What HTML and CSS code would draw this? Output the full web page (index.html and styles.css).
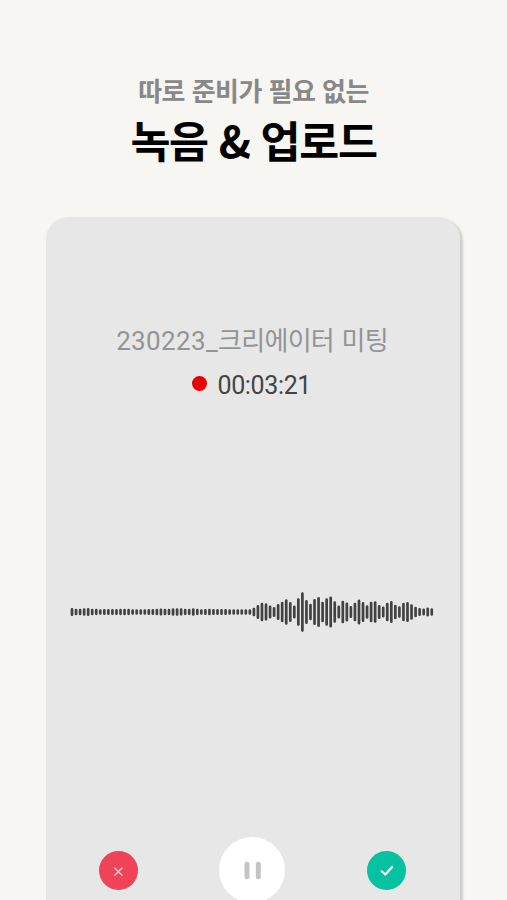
FILE: index.html
```html
<!DOCTYPE html>
<html lang="ko">
<head>
<meta charset="utf-8">
<title>녹음 &amp; 업로드</title>
<link rel="stylesheet" href="styles.css">
</head>
<body>
<main class="page">
  <header class="intro">
    <p class="lead">따로 준비가 필요 없는</p>
    <h1 class="headline">녹음 &amp; 업로드</h1>
  </header>
  <section class="recorder">
    <h2 class="title"><span class="date">230223_</span>크리에이터 미팅</h2>
    <div class="timer"><span class="dot"></span><span class="time">00:03:21</span></div>
    <svg class="wave" viewBox="0 0 364 44"><path id="bars"/></svg>
    <div class="controls">
      <button class="btn cancel" aria-label="취소">
        <svg width="39" height="39" viewBox="0 0 39 39"><path d="M15.800 17l7.2 7.2M23 17L15.800 24.200"/></svg>
      </button>
      <button class="btn pause" aria-label="일시정지">
        <svg width="66" height="66" viewBox="0 0 66 66"><path d="M28 27.200v12.500M39.300 27.200v12.500"/></svg>
      </button>
      <button class="btn done" aria-label="완료">
        <svg width="39" height="39" viewBox="0 0 39 39"><path d="M14.700 20.300l3.600 3.200 6.900-7.500"/></svg>
      </button>
    </div>
  </section>
</main>
<script src="app.js"></script>
</body>
</html>
```
FILE: styles.css
```css
* {
  box-sizing: border-box;
}

body {
  margin: 0;
  background: #f7f6f2;
  font-family: Roboto, "Noto Sans CJK KR", sans-serif;
}

.page {
  height: 900px;
  overflow: hidden;
  display: flex;
  flex-direction: column;
}

.intro {
  height: 217px;
  flex: none;
  padding-top: 72px;
  text-align: center;
  font-family: "Noto Sans CJK KR", sans-serif;
  white-space: nowrap;
}

.lead {
  margin: 0;
  font-size: 26px;
  line-height: 36px;
  font-weight: 700;
  letter-spacing: -0.55px;
  color: #888;
}

.headline {
  margin: 2px 0 0;
  font-size: 43.5px;
  line-height: 60px;
  font-weight: 700;
  letter-spacing: -1.3px;
  color: #000;
}

.recorder {
  width: 414px;
  height: 760px;
  flex: none;
  margin-left: 46px;
  padding: 106px 25px 0 23px;
  border-radius: 22px;
  background: #e7e7e7;
  box-shadow: 3px 2px 2px #d0d0ce;
  display: flex;
  flex-direction: column;
  align-items: center;
}

.title {
  margin: 0;
  font-size: 26px;
  line-height: 36px;
  font-weight: 400;
  letter-spacing: -0.7px;
  word-spacing: 1.6px;
  white-space: nowrap;
  color: #939495;
}

.date {
  letter-spacing: 0.35px;
}

.timer {
  display: flex;
  align-items: center;
  gap: 10.5px;
  height: 30px;
  margin-top: 9px;
  margin-right: 1px;
}

.dot {
  width: 15px;
  height: 15px;
  border-radius: 50%;
  background: #e60000;
}

.time {
  padding-top: 6px;
  font-size: 25px;
  line-height: 30px;
  letter-spacing: -0.35px;
  color: #444;
}

.wave {
  width: 364px;
  height: 44px;
  margin-top: 192px;
  flex: none;
}

.wave path {
  fill: none;
  stroke: #424242;
  stroke-width: 2.7;
  stroke-linecap: round;
}

.controls {
  display: flex;
  align-items: center;
  justify-content: space-between;
  width: 307px;
  margin-top: 203px;
}

.btn {
  padding: 0;
  border: 0;
  border-radius: 50%;
  width: 39px;
  height: 39px;
}

.btn svg {
  display: block;
  fill: none;
  stroke-linecap: round;
  stroke-linejoin: round;
}

.cancel {
  background: #ef4358;
}

.cancel svg {
  stroke: #fbc3c9;
  stroke-width: 1.5;
}

.pause {
  width: 66px;
  height: 66px;
  background: #fff;
}

.pause svg {
  stroke: #c4c4c4;
  stroke-width: 5;
}

.done {
  background: #06c2a0;
}

.done svg {
  stroke: #fff;
  stroke-width: 2.2;
}
```
FILE: app.js
```js
const levels = [
  8, 6.5, 6.5, 7.7, 8, 6.7, 6.3, 5.7, 6, 6, 6, 6, 6.3, 6.7, 6.3,
  5.7, 5.7, 5.7, 5.7, 6, 6, 6.7, 7, 6.7, 6.3, 7.7, 7.7, 7.3, 6.3, 6.3,
  7.7, 6.3, 5.7, 6, 6.7, 6, 6, 6, 6, 5.7, 5.7, 5.7, 5.7, 5.7, 5.7,
  8.5, 14, 18.5, 17.3, 13, 10, 16, 20.5, 25.5, 20, 13, 27.5, 39.5, 24,
  16.5, 26, 30, 20.5, 27.5, 31, 21.5, 13, 22.5, 19, 12, 18.5, 25, 20,
  13.5, 20.5, 21.5, 14, 11, 18.5, 22, 14.5, 11.5, 18.5, 20, 15.5, 10.5,
  8, 7, 9, 7.5
];
const pitch = 4.042;
document.getElementById("bars").setAttribute("d", levels.map((level, i) => {
  const half = level / 2 - 1.35;
  return `M${(2 + i * pitch).toFixed(2)} ${22 - half}V${22 + half}`;
}).join(""));
```
